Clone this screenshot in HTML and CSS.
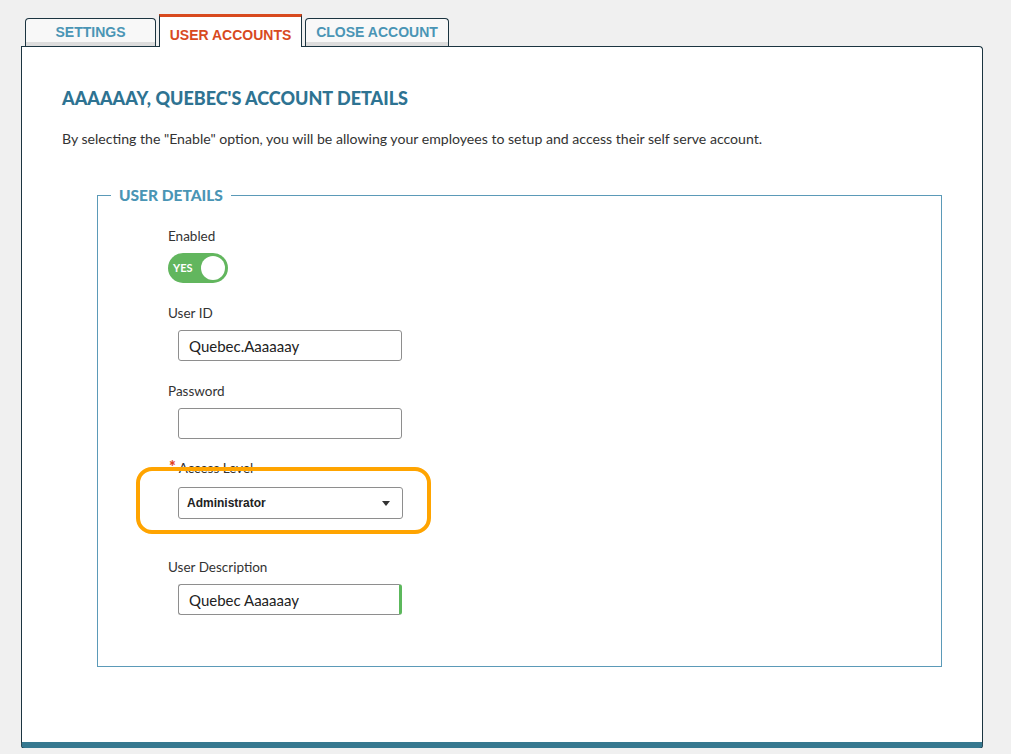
FILE: index.html
```html
<!DOCTYPE html>
<html lang="en">
<head>
  <meta charset="UTF-8">
  <title>User Accounts</title>
  <link rel="stylesheet" href="styles.css">
</head>
<body>

<div id="page">
  <div class="tabs">
    <div class="tab">SETTINGS</div>
    <div class="tab active">USER ACCOUNTS</div>
    <div class="tab">CLOSE ACCOUNT</div>
  </div>

  <div id="panel">
    <h1 class="title">AAAAAAY, QUEBEC'S ACCOUNT DETAILS</h1>
    <p class="intro">By selecting the "Enable" option, you will be allowing your employees to setup and access their self serve account.</p>

    <fieldset class="details">
      <legend>USER DETAILS</legend>

      <div class="field first">
        <div class="label">Enabled</div>
        <div class="toggle">
          <span class="toggle-text">YES</span>
          <span class="knob"></span>
        </div>
      </div>

      <div class="field">
        <div class="label">User ID</div>
        <input class="text" type="text" value="Quebec.Aaaaaay">
      </div>

      <div class="field">
        <div class="label">Password</div>
        <input class="text" type="password" value="">
      </div>

      <div class="field access">
        <div class="label"><span class="req">*</span> Access Level</div>
        <div class="select">
          <span>Administrator</span>
          <span class="caret"></span>
        </div>
        <div class="highlight"></div>
      </div>

      <div class="field">
        <div class="label">User Description</div>
        <input class="text valid" type="text" value="Quebec Aaaaaay">
      </div>
    </fieldset>
  </div>
</div>

</body>
</html>
```

FILE: styles.css
```css
body{
  margin: 0;
  background: #f0f0f0;
  font-family: Lato, "Open Sans", sans-serif;
  color: #333;
}
#page{
  padding: 14px 0 0 21px;
}

/* tabs */
.tabs{
  display: flex;
  align-items: flex-end;
  margin-left: 4px;
  gap: 3px;
}
.tab{
  box-sizing: border-box;
  height: 28px;
  padding-top: 5px;
  text-align: center;
  font-family: "Liberation Sans", Arial, sans-serif;
  font-weight: bold;
  font-size: 14px;
  color: #4a95b5;
  background: #f8f8f8;
  border: 1px solid #1b3440;
  border-bottom: none;
  border-radius: 4px 4px 0 0;
  box-shadow: inset 0 -4px 0 #dcdcdc;
}
.tab:first-child{
  width: 131px;
}
.tab:last-child{
  width: 144px;
}
.tab.active{
  position: relative;
  z-index: 1;
  width: 143px;
  height: 33px;
  margin-bottom: -1px;
  padding-top: 10px;
  color: #d84a1e;
  background: #fff;
  border-top: 3px solid #d84a1e;
  border-radius: 0;
  box-shadow: none;
}

/* panel */
#panel{
  box-sizing: border-box;
  width: 962px;
  height: 702px;
  background: #fff;
  border: 1px solid #1b3440;
  border-bottom: 6px solid #36788f;
  border-radius: 0 4px 4px 4px;
  box-shadow: 0 1px 0 #1b3440;
  padding: 43px 40px 0 40px;
}
.title{
  margin: 0;
  font-size: 18px;
  line-height: 16px;
  font-weight: 900;
  color: #2e7392;
}
.intro{
  margin: 25px 0 0;
  font-size: 14.1px;
  line-height: 16px;
}

.details{
  margin: 39px 0 0 35px;
  padding: 24px 0 44px 70px;
  height: 481px;
  box-sizing: border-box;
  border: 1px solid #5b9ab8;
}
.details legend{
  margin-left: -57px;
  padding: 0 8px;
  font-size: 15.5px;
  font-weight: 900;
  color: #4a95b5;
}

.field{
  position: relative;
  margin-top: 22px;
}
.field.first{
  margin-top: 0;
}
.label{
  font-size: 13.5px;
  line-height: 16px;
  color: #333;
  margin-bottom: 9px;
}
.req{
  color: #e0401c;
  font-size: 16px;
  font-weight: 900;
  margin-left: 1px;
}

.toggle{
  position: relative;
  width: 60px;
  height: 30px;
  border-radius: 15px;
  background: #62b65e;
}
.toggle-text{
  position: absolute;
  left: 5px;
  top: 8px;
  font-size: 11px;
  font-weight: bold;
  color: #fff;
}
.knob{
  position: absolute;
  right: 3px;
  top: 3px;
  width: 24px;
  height: 24px;
  border-radius: 50%;
  background: #fff;
}

.text{
  display: block;
  box-sizing: border-box;
  width: 224px;
  height: 31px;
  margin-left: 10px;
  padding: 0 10px;
  border: 1px solid #8e8e8e;
  border-radius: 3px;
  font-family: Lato, "Open Sans", sans-serif;
  font-size: 15px;
  color: #222;
  outline: none;
}
.text.valid{
  border-right: 3px solid #5cb85c;
}

.access{
  margin-top: 20px;
}
.access .label{
  margin-bottom: 11px;
}
.select{
  display: flex;
  align-items: center;
  justify-content: space-between;
  box-sizing: border-box;
  width: 225px;
  height: 32px;
  margin-left: 10px;
  padding: 0 12px 0 8px;
  border: 1px solid #8e8e8e;
  border-radius: 3px;
  font-family: "Liberation Sans", Arial, sans-serif;
  font-weight: bold;
  font-size: 12px;
  color: #222;
}
.caret{
  width: 0;
  height: 0;
  border-left: 4px solid transparent;
  border-right: 4px solid transparent;
  border-top: 5px solid #333;
}
.highlight{
  position: absolute;
  left: -32px;
  top: 8px;
  width: 295px;
  height: 67px;
  box-sizing: border-box;
  border: 4px solid #ffa400;
  border-radius: 16px;
}
.access + .field{
  margin-top: 40px;
}
```
